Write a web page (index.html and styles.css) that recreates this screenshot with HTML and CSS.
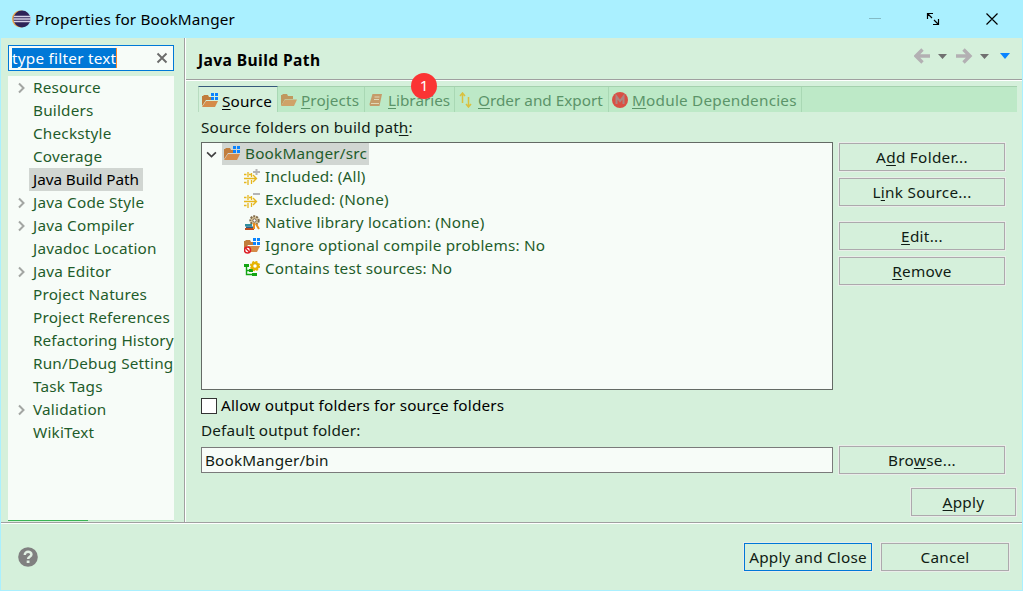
FILE: index.html
```html
<!DOCTYPE html>
<html lang="en">
<head>
<meta charset="utf-8">
<title>Properties for BookManger</title>
<link rel="stylesheet" href="styles.css">
</head>
<body>
<svg class="defs" width="0" height="0">
  <symbol id="folder" viewBox="0 0 16 16"><path d="M0 14V3h1l1-1h4l1 2h5v3H4z" fill="#c17d3c"/><path d="M0 14 4 7.500h12L13 14z" fill="#d58b49"/></symbol>
  <symbol id="src" viewBox="0 0 16 16"><path d="M0 13V3h1l1-1h4l1 2h5v3H4z" fill="#c17d3c"/><path d="M0 14 4 8h12l-3 6z" fill="#d58b49"/><path d="M9 0h3v3H9zM13 0h3v3h-3zM9 4h3v3H9zM13 4h3v3h-3z" fill="#0a84ff"/></symbol>
  <symbol id="filter" viewBox="0 0 16 16"><path d="M0 5.500h2.500M4 3v5M5 5.500h2M0 9.500h12M0 13.500h2.500M4 11v5M7.500 4v4M7.500 11v4M9 6l3.500 3.500L9 13" fill="none" stroke="#e6b71e" stroke-width="1.300"/></symbol>
  <symbol id="chev" viewBox="0 0 10 12"><path d="M2 1.500 6.500 6 2 10.500" fill="none" stroke="#a3a6a3" stroke-width="2"/></symbol>
</svg>
<div class="window">
  <header class="titlebar">
    <svg class="logo" viewBox="0 0 20 20"><circle cx="9.500" cy="10" r="8.500" fill="#e9a34b"/><circle cx="11" cy="10" r="8.500" fill="#2e2357"/><path d="M3 7.500h17M2.500 10h18M3 12.500h17" stroke="#d6d2e6" stroke-width="1.300"/></svg>
    <span class="title">Properties for BookManger</span>
    <svg class="winbtns" viewBox="0 0 140 38"><path d="M0 18.500h12" stroke="#83bac5"/><path d="M58.500 19v-5.500H64M58.500 13.500l4.500 4.500M65 20l4.500 4.500M69.500 19v5.500H64M117.500 13.500l11 11M128.500 13.500l-11 11" fill="none" stroke="#000" stroke-width="1.200"/></svg>
  </header>
  <div class="body">
    <aside class="side">
      <div class="filter"><span class="sel">type filter text</span><svg class="clear" viewBox="0 0 12 12"><path d="M1.500 1.500l9 9M10.500 1.500l-9 9" stroke="#6b6b6b" stroke-width="1.900"/></svg></div>
      <ul class="nav">
        <li><svg><use href="#chev"/></svg><span>Resource</span></li>
        <li><span>Builders</span></li>
        <li><span>Checkstyle</span></li>
        <li><span>Coverage</span></li>
        <li><span class="current">Java Build Path</span></li>
        <li><svg><use href="#chev"/></svg><span>Java Code Style</span></li>
        <li><svg><use href="#chev"/></svg><span>Java Compiler</span></li>
        <li><span>Javadoc Location</span></li>
        <li><svg><use href="#chev"/></svg><span>Java Editor</span></li>
        <li><span>Project Natures</span></li>
        <li><span>Project References</span></li>
        <li><span class="tight">Refactoring History</span></li>
        <li><span>Run/Debug Setting</span></li>
        <li><span>Task Tags</span></li>
        <li><svg><use href="#chev"/></svg><span>Validation</span></li>
        <li><span>WikiText</span></li>
      </ul>
      <div class="scroll"></div>
    </aside>
    <main class="main">
      <div class="head"><h1>Java Build Path</h1>
        <svg class="history" viewBox="0 0 100 20"><path d="M16 10H3M8.500 3.500 2 10l6.500 6.500" fill="none" stroke="#b3b0b3" stroke-width="3.400"/><path d="M42 10h13M49.500 3.500 56 10l-6.500 6.500" fill="none" stroke="#b3b0b3" stroke-width="3.400"/><path d="M24 8h9l-4.500 5zM66 8h9l-4.500 5z" fill="#707070"/><path d="M86 7h10l-5 6z" fill="#0a84ff"/></svg>
      </div>
      <div class="tabs">
        <div class="tab active t1"><svg><use href="#src"/></svg><span><u>S</u>ource</span></div>
        <div class="tab t2"><svg><use href="#folder"/></svg><span><u>P</u>rojects</span></div>
        <div class="tab t3"><svg viewBox="0 0 16 16"><path d="M4.500 2H14l-2.500 12H2l-.5-2z" fill="#c8824a"/><path d="M6.500 5h5M6 7.500h5M3 11.500h8" stroke="#ecd2b0" stroke-width="1.200"/></svg><span><u>L</u>ibraries</span><b class="badge">1</b></div>
        <div class="tab t4"><svg viewBox="0 0 16 16"><path d="M4.500 11V1M2 4l2.500-3L7 4M10.500 5v10M8 12l2.500 3 2.500-3" fill="none" stroke="#e4b411" stroke-width="1.500"/></svg><span><u>O</u>rder and Export</span></div>
        <div class="tab t5"><svg class="solid" viewBox="0 0 16 16"><circle cx="8" cy="8" r="8" fill="#d94f44"/><path d="M4.500 12V4.500L8 9l3.500-4.500V12" fill="none" stroke="#ad8580" stroke-width="2"/></svg><span><u>M</u>odule Dependencies</span></div>
      </div>
      <div class="page">
        <div class="caption">Source folders on build pat<u>h</u>:</div>
        <div class="row">
          <div class="tree">
            <div class="item root"><svg class="open" viewBox="0 0 10 10"><path d="M1 3l4 4 4-4" fill="none" stroke="#404040" stroke-width="1.500"/></svg><div class="picked"><svg><use href="#src"/></svg><span>BookManger/src</span></div></div>
            <div class="item"><svg viewBox="0 0 16 16"><use href="#filter"/><path d="M9 3h7M12.500 0v6" stroke="#b4b4b4" stroke-width="2"/></svg><span>Included: (All)</span></div>
            <div class="item"><svg viewBox="0 0 16 16"><use href="#filter"/><path d="M9 2h7" stroke="#b4b4b4" stroke-width="2"/></svg><span>Excluded: (None)</span></div>
            <div class="item"><svg viewBox="0 0 16 16"><circle cx="10.500" cy="5.500" r="4.200" fill="#dbc99f" stroke="#806b49" stroke-width="2" stroke-dasharray="2 1"/><circle cx="10.500" cy="5.500" r="1.700" fill="#fff" stroke="#765f43"/><path d="M1 9h7v2.500H1z" fill="#2f8e9d"/><path d="M2 11.500h7V13H2z" fill="#255f86"/><path d="M1 13h9v2H1z" fill="#bb4b20"/><path d="M10 8v6M12 9l3 5" stroke="#e78c20" stroke-width="2"/></svg><span>Native library location: (None)</span></div>
            <div class="item"><svg viewBox="0 0 16 16"><use href="#src"/><circle cx="3.500" cy="12" r="3" fill="#fff" stroke="#dc2027" stroke-width="1.600"/><path d="M1.500 10l4 4" stroke="#dc2027" stroke-width="1.400"/></svg><span>Ignore optional compile problems: No</span></div>
            <div class="item"><svg viewBox="0 0 16 16"><path d="M0 3h5v3H0zM5 8h4v3H5zM8 12h5v3H8z" fill="#12a512"/><path d="M2.500 5v8.500H8M3 9.500h3" fill="none" stroke="#12a512" stroke-width="1.400"/><circle cx="11" cy="5" r="3" fill="#fff" stroke="#e5b300" stroke-width="2.500"/><circle cx="11" cy="5" r="4.400" fill="none" stroke="#e5b300" stroke-width="1.500" stroke-dasharray="2 1.450"/></svg><span>Contains test sources: No</span></div>
          </div>
          <div class="actions">
            <button>A<u>d</u>d Folder...</button>
            <button>L<u>i</u>nk Source...</button>
            <button class="gap"><u>E</u>dit...</button>
            <button><u>R</u>emove</button>
          </div>
        </div>
        <div class="check"><i></i><span>Allow output folders for sour<u>c</u>e folders</span></div>
        <div class="caption second">Defaul<u>t</u> output folder:</div>
        <div class="row"><div class="output"><span>BookManger/bin</span></div><button class="browse">Bro<u>w</u>se...</button></div>
        <div class="applyrow"><button class="apply"><u>A</u>pply</button></div>
      </div>
    </main>
  </div>
  <footer class="foot">
    <svg class="help" viewBox="0 0 20 20"><circle cx="10" cy="10" r="9.800" fill="#808080"/><path d="M6.800 8C6.600 3.800 13.600 3.800 13.400 7.500c0 2.300-3.300 2.200-3.300 4.500" fill="none" stroke="#e2f1e4" stroke-width="2.500"/><path d="M8.700 13.500h2.800v2.500H8.700z" fill="#e2f1e4"/></svg>
    <button class="primary">Apply and Close</button><button>Cancel</button>
  </footer>
</div>
</body>
</html>
```
FILE: styles.css
```css
* { box-sizing: border-box; }
body { margin: 0; font: 15.300px/23px "Noto Sans", sans-serif; letter-spacing: .16px; color: #101c14; }
.defs { position: absolute; }
.window { width: 1023px; height: 591px; padding: 0 1px 1px; background: #aaf0ff; display: flex; flex-direction: column; overflow: hidden; }
span, h1 { white-space: nowrap; }
u { text-decoration-thickness: 1px; text-underline-offset: 2px; text-decoration-skip-ink: none; }
svg { flex: none; width: 16px; height: 16px; }
.titlebar { height: 38px; display: flex; align-items: center; padding-left: 10px; color: #000; }
.logo { width: 20px; height: 20px; margin-right: 4px; }
.winbtns { width: 140px; height: 38px; margin-left: auto; margin-right: 13px; }
.body { display: flex; height: 484px; background: #d5f0db; }
.side { width: 184px; padding: 7px 10px 0 7px; border-right: 1px solid #a0a0a0; }
.filter { width: 166px; height: 26px; border: 1px solid #0078d7; background: #f7fcf8; display: flex; align-items: center; justify-content: space-between; padding: 0 5px 0 3px; }
.sel { background: #0078d7; color: #fff; line-height: 20px; border-right: 1px solid #ff8728; letter-spacing: .25px; }
.clear { width: 12px; height: 12px; }
.nav { list-style: none; margin: 5px 0 0; padding: 0; width: 166px; height: 444px; background: #f7fcf8; overflow: hidden; color: #1f5c2b; }
.nav li { display: flex; align-items: center; height: 23px; padding-left: 25px; letter-spacing: .2px; }
.nav li svg { width: 10px; height: 12px; margin: 0 6px 0 -16px; }
.nav .current { background: #d1d6d2; color: #000; margin-left: -4px; padding: 0 4px; letter-spacing: -.05px; }
.nav .tight { letter-spacing: .1px; }
.scroll { width: 166px; height: 1px; background: linear-gradient(to right, #3ab554 80px, #bde9c6 80px); }
.main { flex: 1; min-width: 0; border-left: 1px solid #fff; }
.head { display: flex; align-items: center; justify-content: space-between; height: 42px; padding: 3px 8px 0 12px; border-bottom: 1px solid #a0a0a0; box-shadow: 0 1px #fff; }
h1 { margin: 0; font-size: 15.600px; letter-spacing: .4px; color: #000; }
.history { width: 100px; height: 20px; margin-top: -9px; }
.tabs { display: flex; height: 26px; margin: 6px 5px 0 12px; background: #bde9c7; border-top: 1px solid #a5d1ae; }
.tab { position: relative; display: flex; align-items: center; gap: 4px; padding: 2px 0 0 3px; border-right: 1px solid #a9d8b4; color: #5b9469; letter-spacing: 0; }
.tab svg { opacity: .75; margin-top: -1px; }
.tab.active svg, .tab .solid { opacity: 1; }
.active { background: #d5f0db; color: #000; border-top: 1px solid #35597b; margin-top: -1px; border-left: 1px solid #b8dcc0; padding-top: 3px; letter-spacing: .15px; }
.t1 { width: 80px; } .t2 { width: 87px; } .t3 { width: 90px; } .t4 { width: 154px; } .t5 { width: 193px; }
.t2 { letter-spacing: .1px; }
.t5 { letter-spacing: .22px; }
.badge { position: absolute; left: 46px; top: -14px; width: 26px; height: 26px; border-radius: 50%; background: #fb3434; color: #fff; font-weight: 400; text-align: center; line-height: 24px; }
.page { padding: 4px 6px 0 15px; }
.caption { height: 26px; line-height: 22px; }
.row { display: flex; gap: 6px; }
.tree { width: 632px; height: 248px; border: 1px solid #646a65; background: #f7fcf8; color: #1f5c2b; }
.item { display: flex; align-items: center; gap: 5px; height: 23px; padding-left: 42px; letter-spacing: .19px; }
.item span { margin-top: -1px; }
.root { padding-left: 4px; gap: 5px; height: 22px; }
.open { width: 11px; height: 11px; }
.picked { display: flex; align-items: center; gap: 5px; background: #d1d6d2; height: 22px; padding: 0 2px 0 2px; }
.actions { display: flex; flex-direction: column; gap: 7px; padding-top: 1px; }
button { font: inherit; letter-spacing: .3px; line-height: 24px; color: inherit; width: 166px; height: 28px; padding: 0; white-space: nowrap; background: #d5f0db; border: 1px solid #ada9ad; box-shadow: 0 0 0 1px #e9ede9; }
.gap { margin-top: 9px; }
.check { display: flex; align-items: center; gap: 4px; height: 23px; margin-top: 4px; color: #000; letter-spacing: .18px; }
.check i { width: 16px; height: 16px; border: 1px solid #333; background: #fff; }
.second { margin-top: 2px; height: 27px; line-height: 23px; }
.output { width: 632px; height: 26px; margin-top: 1px; border: 1px solid #7a7a7a; background: #f7fcf8; display: flex; align-items: center; padding-left: 3px; }
.applyrow { display: flex; justify-content: flex-end; margin-top: 14px; }
.apply { width: 105px; }
.foot { height: 68px; border-top: 1px solid #a0a0a0; box-shadow: inset 0 1px #fff; background: #d5f0db; display: flex; align-items: center; gap: 9px; padding: 0 13px 0 17px; }
.help { width: 20px; height: 20px; margin-right: auto; }
.foot button { width: 128px; letter-spacing: .2px; }
.foot .primary { border-color: #0078d7; }
```
